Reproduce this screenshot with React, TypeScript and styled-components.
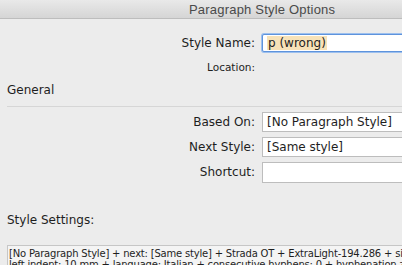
import React from 'react';
import styled, { createGlobalStyle } from 'styled-components';

const GlobalStyle = createGlobalStyle`
  html, body {
    margin: 0;
    padding: 0;
    background: #ececec;
  }
  body {
    font-family: "DejaVu Sans", "Liberation Sans", sans-serif;
    color: #1e1e1e;
  }
`;

const Window = styled.div`
  width: 402px;
  height: 265px;
  overflow: hidden;
  background: #ececec;
  display: flex;
  flex-direction: column;
`;

const TitleBar = styled.div`
  height: 18px;
  flex: none;
  background: linear-gradient(#e9e9e9, #d5d5d5);
  border-bottom: 1px solid #bdbdbd;
  display: flex;
  align-items: center;
  padding-left: 189px;
  font-family: "Liberation Sans", sans-serif;
  font-size: 13px;
  letter-spacing: 0.2px;
  color: #4a4a4a;
  white-space: nowrap;
`;

const Body = styled.div`
  padding: 15px 0 0 7px;
  display: flex;
  flex-direction: column;
`;

const FormGrid = styled.div<{ $top?: number }>`
  display: grid;
  grid-template-columns: 248px 220px;
  column-gap: 7px;
  row-gap: 5px;
  align-items: center;
  margin-top: ${p => p.$top ?? 0}px;
`;

const Label = styled.div<{ $small?: boolean; $height?: number }>`
  text-align: right;
  font-size: ${p => (p.$small ? '10.5px' : '12px')};
  height: ${p => p.$height ?? 20}px;
  line-height: ${p => p.$height ?? 20}px;
  white-space: nowrap;
`;

const Field = styled.div<{ $focused?: boolean; $height?: number }>`
  height: ${p => p.$height ?? 20}px;
  box-sizing: border-box;
  background: #fff;
  border: 1px solid ${p => (p.$focused ? '#5e93dc' : '#bdbdbd')};
  border-radius: ${p => (p.$focused ? '2px' : '0')};
  box-shadow: ${p => (p.$focused ? '0 0 0 1px #9dc0ee' : 'none')};
  display: flex;
  align-items: center;
  padding-left: 4px;
  font-size: 12px;
  white-space: nowrap;
`;

const Selected = styled.span`
  background: #f7e2b8;
  padding: 0 1px;
`;

const Heading = styled.div<{ $top: number }>`
  margin-top: ${p => p.$top}px;
  font-size: 12px;
  line-height: 16px;
  white-space: nowrap;
`;

const Rule = styled.div`
  margin-top: 8px;
  height: 1px;
  background: #d6d6d6;
`;

const SettingsBox = styled.div`
  margin-top: 17px;
  border: 1px solid #c6c6c6;
  border-right: none;
  background: #f4f4f4;
  padding: 2px 0 0 1px;
  font-size: 10px;
  letter-spacing: -0.2px;
  line-height: 11px;
  white-space: nowrap;
  height: 40px;
  overflow: hidden;
`;

export default function App() {
  return (
    <>
      <GlobalStyle />
      <Window>
        <TitleBar>Paragraph Style Options</TitleBar>
        <Body>
          <FormGrid>
            <Label $height={18}>Style Name:</Label>
            <Field $focused $height={18}>
              <Selected>p (wrong)</Selected>
            </Field>
          </FormGrid>
          <FormGrid>
            <Label $small $height={30}>Location:</Label>
            <div />
          </FormGrid>
          <Heading $top={0}>General</Heading>
          <Rule />
          <FormGrid $top={5}>
            <Label>Based On:</Label>
            <Field>[No Paragraph Style]</Field>
            <Label>Next Style:</Label>
            <Field>[Same style]</Field>
            <Label $height={21}>Shortcut:</Label>
            <Field $height={21} />
          </FormGrid>
          <Heading $top={29}>Style Settings:</Heading>
          <SettingsBox>
            [No Paragraph Style] + next: [Same style] + Strada OT + ExtraLight-194.286 + size: 9 pt
            <br />
            left indent: 10 mm + language: Italian + consecutive hyphens: 0 + hyphenation zone: 0 mm
          </SettingsBox>
        </Body>
      </Window>
    </>
  );
}
